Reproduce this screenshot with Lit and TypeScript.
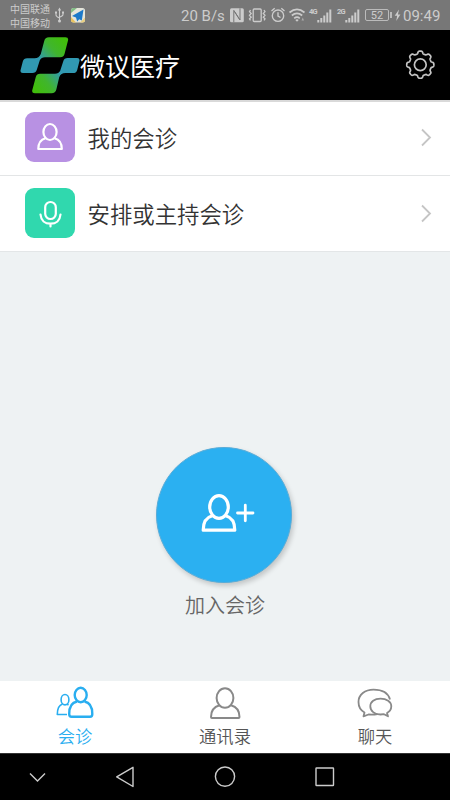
import { LitElement, html, svg, css } from "lit";
import { customElement, property } from "lit/decorators.js";

// Outline of an eight-toothed gear with softly rounded teeth.
const gearPath = (cx: number, cy: number) => {
  const pts: string[] = [];
  for (let i = 0; i < 192; i++) {
    const a = (i / 192) * Math.PI * 2;
    const r = 12.3 + (1.25 * Math.tanh(2.2 * Math.cos(8 * a))) / Math.tanh(2.2);
    pts.push(`${(cx + r * Math.sin(a)).toFixed(2)} ${(cy - r * Math.cos(a)).toFixed(2)}`);
  }
  return `M${pts.join("L")}Z`;
};

const ICONS: Record<string, { box: string; body: unknown }> = {
  usb: {
    box: "54 7 11 16",
    body: svg`<path d="M59.5 9v12M56 12.5v2.5q0 1.6 3.5 3M63 12v2.500q0 1.500-3.500 2.700" fill="none" stroke="#ccc" stroke-width="1.1"/><path d="M57.800 10.500l1.700-3 1.700 3zM55 11.500h2v2h-2zM62 11.500h2v2h-2z" fill="#ccc"/><circle cx="59.500" cy="21" r="1.500" fill="#ccc"/>`,
  },
  map: {
    box: "71 8 14 15",
    body: svg`<rect x="71" y="8" width="14" height="14.500" rx="2.500" fill="#e5e5da"/><path d="M71 13V10.500Q71 8 73.500 8H77z" fill="#83bd86"/><path d="M71 17l5 5.500h-2.500Q71 22.500 71 20z" fill="#eac35d"/><path d="M80 22.500l5-5V20q0 2.500-2.500 2.500z" fill="#e9cf82"/><path d="M83.500 9.500L72 16l4 1.500 1.200 4 2-2.200 2.600 1.200z" fill="#1c79c9"/>`,
  },
  nfc: {
    box: "230 8 14 15",
    body: svg`<rect x="230" y="8.300" width="13.800" height="14" rx="1.500" fill="#ccc"/><path d="M233.800 22.300V10.500l6 9.300M240 8.300V20l-6-9.300" fill="none" stroke="#777" stroke-width="1"/>`,
  },
  vibrate: {
    box: "248 7 18 17",
    body: svg`<g fill="none" stroke="#ccc" stroke-width="1.300"><rect x="253.200" y="9" width="8" height="12.500" rx="1"/><path d="M250.500 10l-1 1.700 1.700 1.700-1.700 1.900 1.700 1.900-1.700 1.700 1 1.500M264 10l1 1.700-1.700 1.700 1.700 1.900-1.700 1.900 1.700 1.700-1 1.500"/></g>`,
  },
  alarm: {
    box: "270 7 16 17",
    body: svg`<g fill="none" stroke="#ccc" stroke-width="1.400"><circle cx="278" cy="15.700" r="5.700"/><path d="M278 12.300v3.700l2.500 1.500M271.500 11l3.200-2.700M284.500 11l-3.200-2.700"/></g>`,
  },
  wifi: {
    box: "288 7 18 17",
    body: svg`<g fill="none" stroke="#ccc" stroke-width="1.700"><path d="M289.500 12.500q7.500-6.200 15 0M291.800 15.500q5.200-4.200 10.400 0M294.200 18.300q2.800-2.200 5.600 0"/></g><path d="M295.300 20l1.700 1.800 1.700-1.800q-1.700-1.300-3.400 0z" fill="#ccc"/><path d="M301.500 20.500l1.300-3 1.200 3z" fill="#aaa"/>`,
  },
  signal: {
    box: "317 7 15 15",
    body: svg`<path d="M317.300 19h2v2.500h-2zM320.300 17h2v4.500h-2zM323.300 14.500h2v7h-2zM326.300 11.500h2v10h-2zM329.300 8.500h2v13h-2z" fill="#ccc"/>`,
  },
  bolt: {
    box: "393 9 8 13",
    body: svg`<path d="M398 9.500l-4.300 6.200h2.500l-1 5.300 4.200-6.500h-2.500z" fill="#ccc"/>`,
  },
  logo: {
    box: "20 36 60 58",
    body: svg`<defs>
      <linearGradient id="t" x1="63" y1="40" x2="40" y2="60" gradientUnits="userSpaceOnUse"><stop offset="0" stop-color="#41bd0d"/><stop offset=".45" stop-color="#40b52e"/><stop offset="1" stop-color="#3199b2"/></linearGradient>
      <linearGradient id="b" x1="36" y1="90" x2="60" y2="72" gradientUnits="userSpaceOnUse"><stop offset="0" stop-color="#41bd0d"/><stop offset=".45" stop-color="#40b52e"/><stop offset="1" stop-color="#3199b2"/></linearGradient></defs>
      <path d="M49 37.300h16.500q3.300 0 2.500 3.200L64.500 54q-.9 3.300-4.300 3.300H45q-3.700 0-5.200 3l-3 9.500q-1 3.300-4.500 3.300h-9.500q-3 0-2.200-3.200l2.200-8.500q1-3.200 4.300-3.200h7.500q4.500 0 6.200-4.200l3.300-12.500q.9-4.200 4.900-4.200z" fill="url(#t)"/>
      <path d="M51.500 93.300H34.800q-3.300 0-2.500-3.200L35.800 77q.9-3.300 4.300-3.300H55q3.700 0 5.200-3l3-9.300q1-3.300 4.500-3.300h9.500q3 0 2.200 3.200l-2.200 8.600q-1 3.200-4.300 3.200h-7.500q-4.500 0-6.200 4.200l-2.800 12q-.9 4-4.900 4z" fill="url(#b)"/>`,
  },
  gear: {
    box: "405 49 31 32",
    body: svg`<g fill="none" stroke="#c4c4c4" stroke-width="1.700"><path d=${gearPath(420.3, 64.700)}/><circle cx="420.300" cy="64.700" r="5.900"/></g>`,
  },
  person: {
    box: "25 112 50 50",
    body: svg`<g fill="none" stroke="#fff" stroke-width="2.200" stroke-linejoin="round"><ellipse cx="50" cy="132" rx="6.600" ry="8"/><path d="M45.500 138.200C40.500 139.500 38.300 143.500 38.300 149H61.800C61.800 143.500 59.500 139.500 54.500 138.200"/></g>`,
  },
  mic: {
    box: "25 188 50 50",
    body: svg`<g fill="none" stroke="#fff" stroke-width="2.200" stroke-linecap="round"><rect x="45.200" y="202" width="10.600" height="17" rx="5.300"/><path d="M40.500 214.500C41 220.500 45 223.700 50.500 223.700S60 220.500 60.500 214.500M50.500 224v2.500"/></g>`,
  },
  chevron: {
    box: "420 128 12 19",
    body: svg`<path d="M422 129.500l8 8-8 8" fill="none" stroke="#c5c5c5" stroke-width="1.800"/>`,
  },
  join: {
    box: "200 492 56 42",
    body: svg`<g fill="none" stroke="#fff" stroke-width="3.200" stroke-linejoin="round"><ellipse cx="219" cy="507" rx="9.300" ry="11.400"/><path d="M212.300 515.800C206 517.500 203.200 523 203.200 530.200H234.800C234.800 523 232 517.500 225.700 515.800"/><path d="M237.500 513h15.500M245.300 505.200v15.600" stroke-width="2.800" stroke-linecap="round"/></g>`,
  },
  group: {
    box: "55 685 40 36",
    body: svg`<g fill="none" stroke="#29aef0" stroke-linejoin="round"><g stroke-width="2.400"><ellipse cx="80.700" cy="695" rx="6" ry="7.200"/><path d="M77 701.500C71.500 702.500 69.200 707 69.200 714Q69.200 716.800 71.500 716.800H90Q92.300 716.800 92.300 714C92.300 707 90 702.500 84.500 701.500"/></g><g stroke-width="1.600"><ellipse cx="65" cy="699.700" rx="3.900" ry="5.200"/><path d="M62.500 704C58.500 705.300 57.300 709 57.300 714.500H67M67 704l1.500 1"/></g></g>`,
  },
  contact: {
    box: "207 686 35 36",
    body: svg`<g fill="none" stroke="#898989" stroke-width="2" stroke-linejoin="round"><ellipse cx="224" cy="699" rx="8.400" ry="9.800"/><path d="M218.500 706.300C212.500 708 210 713 210 718Q210 719 211 719H237.500Q238.500 719 238.500 718C238.500 713 236 708 230 706.300"/></g>`,
  },
  chat: {
    box: "357 688 37 32",
    body: svg`<g fill="none" stroke="#898989" stroke-width="1.800" stroke-linejoin="round"><path d="M390 700.500C388 693.500 381.500 690.700 373.500 690.700 365 690.700 358.500 695.500 358.500 703 358.500 707.500 361 711.500 364.500 713.500L363.500 717.300 368.500 715.500Q373 716 377.500 715"/><path d="M380.500 699.700C374.500 699.700 370.300 702.700 370.300 707.300S374.500 715.500 380.500 715.500L384 715.200 388 717.300 387 714C389.800 712.500 391.300 710 391.300 707.300 391.300 702.700 386.500 699.700 380.500 699.700z"/></g>`,
  },
  down: { box: "28 769 19 14", body: svg`<path d="M30 772.500l7.500 7.500 7.500-7.500" fill="none" stroke="#ccc" stroke-width="1.400"/>` },
  back: { box: "114 765 21 23", body: svg`<path d="M133 767.300v19.200l-16.300-9.600z" fill="none" stroke="#ccc" stroke-width="1.400" stroke-linejoin="round"/>` },
  home: { box: "214 765 22 23", body: svg`<circle cx="225" cy="776.600" r="9.600" fill="none" stroke="#ccc" stroke-width="1.400"/>` },
  recent: { box: "314 765 21 23", body: svg`<rect x="316" y="768" width="17.500" height="17.500" rx=".5" fill="none" stroke="#ccc" stroke-width="1.400"/>` },
};

@customElement("line-icon")
class LineIcon extends LitElement {
  @property() name = "";
  static styles = css`
    :host { display: block; flex: none; }
    svg { display: block; }
  `;
  render() {
    const { box, body } = ICONS[this.name];
    const [, , w, h] = box.split(" ");
    return html`<svg width=${w} height=${h} viewBox=${box}>${body}</svg>`;
  }
}

@customElement("app-root")
class AppRoot extends LitElement {
  static styles = css`
    :host {
      display: flex; flex-direction: column; width: 450px; height: 800px; overflow: hidden;
      background: #eef2f3; font-family: Roboto, "Noto Sans CJK SC", sans-serif; box-sizing: border-box;
    }
    * { box-sizing: border-box; }
    .status { flex: none; height: 30px; background: #777; color: #ccc; display: flex; align-items: center; white-space: nowrap; padding-left: 10px; }
    .carriers { width: 44px; font: 10px/14px "Noto Sans CJK SC", sans-serif; padding-top: 1px; }
    .gap { margin-left: 6px; }
    .rate { font-size: 15px; width: 49px; margin-left: 96px; padding-top: 1px; }
    .g1 { margin-left: 4px; }
    .g2 { margin-left: 2px; }
    .net { font: 700 7.500px/8px Roboto, sans-serif; align-self: flex-start; margin: 8px 0 0 3px; width: 8px; letter-spacing: -.8px; }
    .net2 { margin-left: 5px; }
    .battery { width: 24px; height: 12px; border: 1px solid #bbb; border-radius: 2px; font-size: 11px; line-height: 11px; text-align: center; margin-left: 5px; }
    .nub { width: 2px; height: 6px; background: #bbb; margin: 0 2px 0 1px; }
    .time { font-size: 15px; margin-left: 1px; padding-top: 1px; }
    .header { flex: none; height: 70px; background: #000; display: flex; align-items: center; padding: 0 14px 0 20px; }
    .title { flex: 1; margin: 0; color: #fff; font-size: 25px; line-height: 36px; font-weight: 400; padding-top: 5px; }
    .list { flex: none; height: 152px; border-top: 2px solid #d9d9d9; border-bottom: 1px solid #e3e6e7; background: #fff; }
    .row { height: 73px; display: flex; align-items: center; padding: 0 18px 2px 25px; }
    .row + .row { border-top: 1px solid #e3e5e6; height: 76px; padding-bottom: 0; }
    .tile { width: 50px; height: 50px; border-radius: 9px; margin: -1px 12.500px 0 0; flex: none; }
    .purple { background: #b891e3; }
    .green { background: #30d8ae; }
    .label { flex: 1; font-size: 22.400px; color: #333; line-height: 32px; font-weight: 350; padding-top: 3px; }
    .main { flex: 1; display: flex; flex-direction: column; align-items: center; padding: 195px 2px 0 0; }
    .join {
      width: 136px; height: 136px; flex: none; border-radius: 50%; background: #2bb0f1; border: 1px solid #58acd8;
      box-shadow: 2px 3px 5px rgba(0, 0, 0, .18); display: flex; align-items: center; justify-content: center;
      padding: 0 0 4px 8px;
    }
    .caption { font-size: 20px; line-height: 28px; color: #666; margin: 9px 0 0 2px; font-weight: 350; }
    .tabs { flex: none; height: 72px; background: #fff; display: flex; }
    .tab { flex: 1; display: flex; flex-direction: column; align-items: center; color: #555; font-size: 17.300px; line-height: 24px; font-weight: 350; }
    .art { height: 44px; padding-bottom: 1px; display: flex; align-items: center; }
    .active { color: #29aef0; }
    .nav { flex: none; height: 47px; background: #000; border-top: 1px solid #333; display: flex; align-items: center; padding: 0 0 1px 28px; }
    .n1 { margin-left: 67px; }
    .n2 { margin-left: 79px; }
    .n3 { margin-left: 78px; }
  `;

  render() {
    return html`
      <div class="status">
        <div class="carriers"><div>中国联通</div><div>中国移动</div></div>
        <line-icon name="usb"></line-icon>
        <line-icon class="gap" name="map"></line-icon>
        <span class="rate">20 B/s</span>
        <line-icon name="nfc"></line-icon>
        <line-icon class="g1" name="vibrate"></line-icon>
        <line-icon class="g1" name="alarm"></line-icon>
        <line-icon class="g2" name="wifi"></line-icon>
        <span class="net">4G</span><line-icon name="signal"></line-icon>
        <span class="net net2">2G</span><line-icon name="signal"></line-icon>
        <span class="battery">52</span><span class="nub"></span>
        <line-icon name="bolt"></line-icon>
        <span class="time">09:49</span>
      </div>
      <div class="header">
        <line-icon name="logo"></line-icon>
        <h1 class="title">微议医疗</h1>
        <line-icon name="gear"></line-icon>
      </div>
      <div class="list">
        <div class="row">
          <line-icon class="tile purple" name="person"></line-icon>
          <span class="label">我的会诊</span>
          <line-icon name="chevron"></line-icon>
        </div>
        <div class="row">
          <line-icon class="tile green" name="mic"></line-icon>
          <span class="label">安排或主持会诊</span>
          <line-icon name="chevron"></line-icon>
        </div>
      </div>
      <div class="main">
        <div class="join"><line-icon name="join"></line-icon></div>
        <div class="caption">加入会诊</div>
      </div>
      <div class="tabs">
        <div class="tab active"><div class="art"><line-icon name="group"></line-icon></div>会诊</div>
        <div class="tab"><div class="art"><line-icon name="contact"></line-icon></div>通讯录</div>
        <div class="tab"><div class="art"><line-icon name="chat"></line-icon></div>聊天</div>
      </div>
      <div class="nav">
        <line-icon name="down"></line-icon>
        <line-icon class="n1" name="back"></line-icon>
        <line-icon class="n2" name="home"></line-icon>
        <line-icon class="n3" name="recent"></line-icon>
      </div>
    `;
  }
}
